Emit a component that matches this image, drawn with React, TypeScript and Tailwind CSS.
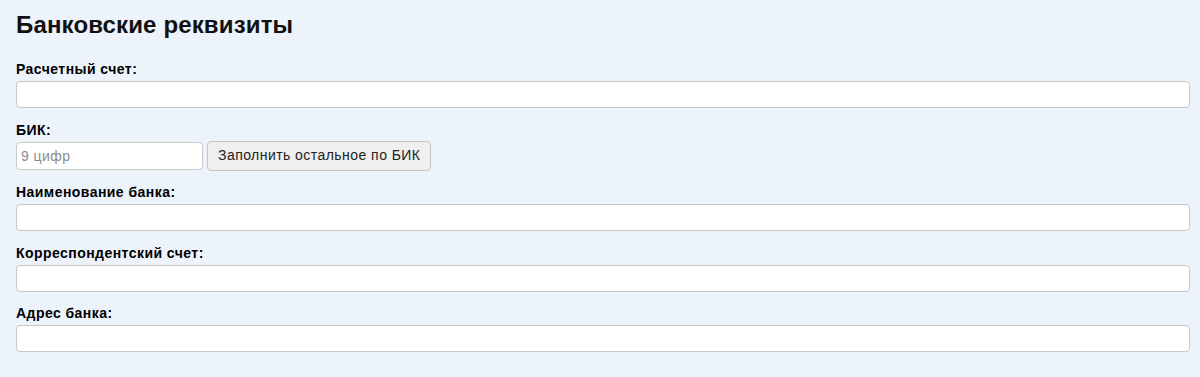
import { useState } from 'react';

const fieldClass =
    'block w-full h-[27px] px-1 bg-white border border-[#c8c8c8] rounded-[4px] text-[14px] text-[#222] outline-none';

const Field = ({ label }: { label: string }): JSX.Element => (
    <div className="mb-[13.5px]">
        <label className="block mb-1 text-[14px] leading-[16px] font-bold tracking-[0.45px] text-black">
            {label}
        </label>
        <input type="text" className={fieldClass} />
    </div>
);

const App = (): JSX.Element => {
    const [bik, setBik] = useState('');

    return (
        <div
            className="min-h-screen bg-[#edf3fb] pt-[11px] pl-4 pr-[10px] text-black"
            style={{ fontFamily: '"Liberation Sans", Arial, sans-serif' }}
        >
            <h2 className="text-[24px] leading-[28px] font-bold tracking-[0.15px] text-[#111] mb-[22px]">
                Банковские реквизиты
            </h2>

            <Field label="Расчетный счет:" />

            <div className="mb-[13.5px]">
                <label className="block mb-[3px] text-[14px] leading-[16px] font-bold tracking-[0.45px]">
                    БИК:
                </label>
                <div className="flex items-center gap-1 h-[30px]">
                    <input
                        type="text"
                        value={bik}
                        onChange={(e) => setBik(e.target.value)}
                        placeholder="9 цифр"
                        className="w-[187px] h-[28px] px-1 bg-white border border-[#c8c8c8] rounded-[4px] text-[14px] tracking-[0.45px] text-[#222] placeholder:text-[#8a8a8a] outline-none"
                    />
                    <button
                        type="button"
                        className="h-[30px] px-[10px] bg-[#efefef] border border-[#c4c4c4] rounded-[4px] text-[14px] tracking-[0.45px] text-[#222]"
                    >
                        Заполнить остальное по БИК
                    </button>
                </div>
            </div>

            <Field label="Наименование банка:" />
            <Field label="Корреспондентский счет:" />
            <Field label="Адрес банка:" />
        </div>
    );
};

export default App;
